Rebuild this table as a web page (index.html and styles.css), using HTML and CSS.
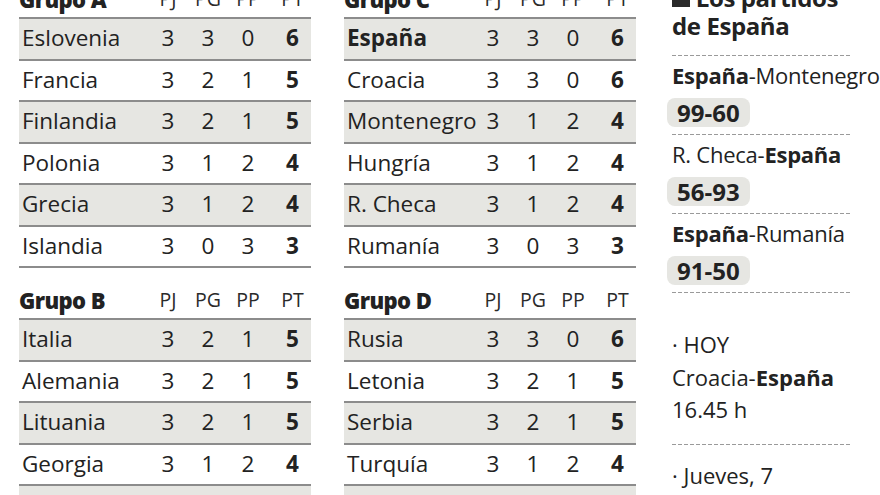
FILE: index.html
```html
<!DOCTYPE html>
<html lang="es">
<head>
<meta charset="utf-8">
<link rel="stylesheet" href="styles.css">
</head>
<body>
<div class="page">
  <div class="col">
    <section class="group">
      <div class="head"><span class="gname">Grupo A</span><span>PJ</span><span>PG</span><span>PP</span><span class="pt">PT</span></div>
      <div class="rows">
        <div class="row"><span class="team">Eslovenia</span><span>3</span><span>3</span><span>0</span><b class="pt">6</b></div>
        <div class="row"><span class="team">Francia</span><span>3</span><span>2</span><span>1</span><b class="pt">5</b></div>
        <div class="row"><span class="team">Finlandia</span><span>3</span><span>2</span><span>1</span><b class="pt">5</b></div>
        <div class="row"><span class="team">Polonia</span><span>3</span><span>1</span><span>2</span><b class="pt">4</b></div>
        <div class="row"><span class="team">Grecia</span><span>3</span><span>1</span><span>2</span><b class="pt">4</b></div>
        <div class="row"><span class="team">Islandia</span><span>3</span><span>0</span><span>3</span><b class="pt">3</b></div>
      </div>
    </section>
    <section class="group">
      <div class="head"><span class="gname">Grupo B</span><span>PJ</span><span>PG</span><span>PP</span><span class="pt">PT</span></div>
      <div class="rows">
        <div class="row"><span class="team">Italia</span><span>3</span><span>2</span><span>1</span><b class="pt">5</b></div>
        <div class="row"><span class="team">Alemania</span><span>3</span><span>2</span><span>1</span><b class="pt">5</b></div>
        <div class="row"><span class="team">Lituania</span><span>3</span><span>2</span><span>1</span><b class="pt">5</b></div>
        <div class="row"><span class="team">Georgia</span><span>3</span><span>1</span><span>2</span><b class="pt">4</b></div>
        <div class="row"><span class="team">Ucrania</span><span>3</span><span>1</span><span>2</span><b class="pt">4</b></div>
        <div class="row"><span class="team">Israel</span><span>3</span><span>0</span><span>3</span><b class="pt">3</b></div>
      </div>
    </section>
  </div>
  <div class="col">
    <section class="group">
      <div class="head"><span class="gname">Grupo C</span><span>PJ</span><span>PG</span><span>PP</span><span class="pt">PT</span></div>
      <div class="rows">
        <div class="row"><b class="team">España</b><span>3</span><span>3</span><span>0</span><b class="pt">6</b></div>
        <div class="row"><span class="team">Croacia</span><span>3</span><span>3</span><span>0</span><b class="pt">6</b></div>
        <div class="row"><span class="team">Montenegro</span><span>3</span><span>1</span><span>2</span><b class="pt">4</b></div>
        <div class="row"><span class="team">Hungría</span><span>3</span><span>1</span><span>2</span><b class="pt">4</b></div>
        <div class="row"><span class="team">R. Checa</span><span>3</span><span>1</span><span>2</span><b class="pt">4</b></div>
        <div class="row"><span class="team">Rumanía</span><span>3</span><span>0</span><span>3</span><b class="pt">3</b></div>
      </div>
    </section>
    <section class="group">
      <div class="head"><span class="gname">Grupo D</span><span>PJ</span><span>PG</span><span>PP</span><span class="pt">PT</span></div>
      <div class="rows">
        <div class="row"><span class="team">Rusia</span><span>3</span><span>3</span><span>0</span><b class="pt">6</b></div>
        <div class="row"><span class="team">Letonia</span><span>3</span><span>2</span><span>1</span><b class="pt">5</b></div>
        <div class="row"><span class="team">Serbia</span><span>3</span><span>2</span><span>1</span><b class="pt">5</b></div>
        <div class="row"><span class="team">Turquía</span><span>3</span><span>1</span><span>2</span><b class="pt">4</b></div>
        <div class="row"><span class="team">Bélgica</span><span>3</span><span>1</span><span>2</span><b class="pt">4</b></div>
        <div class="row"><span class="team">Gran Bretaña</span><span>3</span><span>0</span><span>3</span><b class="pt">3</b></div>
      </div>
    </section>
  </div>
  <aside class="side">
    <h2 class="title"><span class="square"></span> Los partidos<br>de España</h2>
    <div class="dash"></div>
    <div class="match">
      <div class="teams"><b>España</b>-Montenegro</div>
      <div class="score">99-60</div>
    </div>
    <div class="dash"></div>
    <div class="match">
      <div class="teams">R. Checa-<b>España</b></div>
      <div class="score">56-93</div>
    </div>
    <div class="dash"></div>
    <div class="match">
      <div class="teams"><b>España</b>-Rumanía</div>
      <div class="score">91-50</div>
    </div>
    <div class="dash"></div>
    <div class="next first">
      <div>· HOY</div>
      <div>Croacia-<b>España</b></div>
      <div>16.45 h</div>
    </div>
    <div class="dash"></div>
    <div class="next second">
      <div>· Jueves, 7</div>
      <div>Octavos de final</div>
    </div>
  </aside>
</div>
</body>
</html>
```

FILE: styles.css
```css
html, body {
  margin: 0;
  padding: 0;
  background: #ffffff;
  overflow: hidden;
}
body {
  font-family: "Open Sans", "DejaVu Sans", sans-serif;
  color: #222;
  width: 880px;
  height: 495px;
}
.page {
  display: grid;
  grid-template-columns: 292px 292px 208px;
  column-gap: 33px;
  padding-left: 19px;
  margin-top: -12px;
}
.side {
  margin-left: 3px;
}
.group + .group {
  margin-top: 21px;
}
.head,
.row {
  display: grid;
  grid-template-columns: 129px 40px 40px 40px 43px;
  align-items: center;
  text-align: center;
}
.head {
  box-sizing: border-box;
  height: 29px;
  align-items: end;
  padding-bottom: 8px;
  line-height: 20px;
  font-size: 19.5px;
  color: #2a2a2a;
}
.gname {
  text-align: left;
  font-weight: 800;
  font-size: 22px;
  letter-spacing: -0.6px;
  color: #222;
}
.pt {
  padding-left: 6px;
}
.rows {
  border-top: 2px solid #8c8c8c;
}
.row {
  box-sizing: border-box;
  height: 41.5px;
  padding-bottom: 2px;
  border-bottom: 2px solid #8c8c8c;
  font-size: 22.5px;
}
.row:nth-child(odd) {
  background: #e6e6e2;
}
.row b {
  font-weight: 700;
}
.team {
  text-align: left;
  padding-left: 3px;
  white-space: nowrap;
}
.title {
  margin: -4px 0 15px;
  font-size: 24px;
  line-height: 28px;
  font-weight: 700;
  letter-spacing: -0.4px;
  color: #222;
}
.square {
  display: inline-block;
  width: 18px;
  height: 16px;
  background: #2a2a2a;
}
.dash {
  width: 178px;
  height: 1px;
  background: repeating-linear-gradient(to right, #9a9a9a 0 4px, transparent 4px 6px);
}
.match {
  padding: 5px 0 7px;
}
.teams {
  font-size: 22px;
  line-height: 28px;
  letter-spacing: -0.25px;
  white-space: nowrap;
}
.teams b, .next b {
  font-weight: 700;
}
.score {
  display: inline-block;
  margin-top: 9px;
  margin-left: -5px;
  padding: 0 10px;
  height: 29px;
  line-height: 29px;
  font-size: 24px;
  font-weight: 700;
  background: #e6e6e2;
  border-radius: 8px;
}
.next {
  font-size: 22px;
  line-height: 32.5px;
  white-space: nowrap;
}
.next.first {
  padding: 35px 0 18px;
}
.next.second {
  padding-top: 14px;
}
```
